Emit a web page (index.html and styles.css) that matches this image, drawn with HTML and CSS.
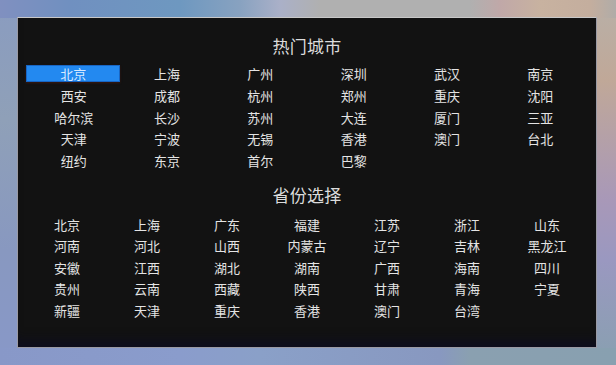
FILE: index.html
```html
<!DOCTYPE html>
<html lang="zh">
<head>
<meta charset="utf-8">
<link rel="stylesheet" href="styles.css">
</head>
<body>
<div class="panel">
  <div class="title">热门城市</div>
  <div class="grid hot">
    <div class="item active">北京</div><div class="item">上海</div><div class="item">广州</div><div class="item">深圳</div><div class="item">武汉</div><div class="item">南京</div>
    <div class="item">西安</div><div class="item">成都</div><div class="item">杭州</div><div class="item">郑州</div><div class="item">重庆</div><div class="item">沈阳</div>
    <div class="item">哈尔滨</div><div class="item">长沙</div><div class="item">苏州</div><div class="item">大连</div><div class="item">厦门</div><div class="item">三亚</div>
    <div class="item">天津</div><div class="item">宁波</div><div class="item">无锡</div><div class="item">香港</div><div class="item">澳门</div><div class="item">台北</div>
    <div class="item">纽约</div><div class="item">东京</div><div class="item">首尔</div><div class="item">巴黎</div>
  </div>
  <div class="title title2">省份选择</div>
  <div class="grid prov">
    <div class="item">北京</div><div class="item">上海</div><div class="item">广东</div><div class="item">福建</div><div class="item">江苏</div><div class="item">浙江</div><div class="item">山东</div>
    <div class="item">河南</div><div class="item">河北</div><div class="item">山西</div><div class="item">内蒙古</div><div class="item">辽宁</div><div class="item">吉林</div><div class="item">黑龙江</div>
    <div class="item">安徽</div><div class="item">江西</div><div class="item">湖北</div><div class="item">湖南</div><div class="item">广西</div><div class="item">海南</div><div class="item">四川</div>
    <div class="item">贵州</div><div class="item">云南</div><div class="item">西藏</div><div class="item">陕西</div><div class="item">甘肃</div><div class="item">青海</div><div class="item">宁夏</div>
    <div class="item">新疆</div><div class="item">天津</div><div class="item">重庆</div><div class="item">香港</div><div class="item">澳门</div><div class="item">台湾</div>
  </div>
</div>
</body>
</html>
```
FILE: styles.css
```css
html, body {
  margin: 0;
  padding: 0;
}
body {
  width: 616px;
  height: 365px;
  overflow: hidden;
  font-family: "Noto Sans CJK SC", "Noto Sans", sans-serif;
  background:
    linear-gradient(to right, #8090c0 0, #7090c0 70px, #6e98c0 180px, #88a2c0 240px, #aab0c8 280px, #b0b0b0 320px, #b0b0b0 470px, #c0a8a8 500px, #c8b2a0 540px, #c4ae9e 590px, #b0aca8 616px) top / 100% 18px no-repeat,
    linear-gradient(to right, #8898c8 0, #8a9ccc 180px, #8aa0c8 260px, #8898c0 440px, #8aa0b0 470px, #88a0b0 616px) bottom / 100% 17px no-repeat,
    linear-gradient(to bottom, #b8b0a8 0, #c0a898 80px, #a898b8 200px, #9a98c0 260px, #88a0b0 365px) right / 19px 100% no-repeat,
    linear-gradient(to bottom, #8a9cc0 0, #8fa0b8 120px, #8898c0 250px, #8898c8 365px) left / 17px 100% no-repeat;
  box-sizing: border-box;
  padding: 17px 19px 17px 17px;
}
.panel {
  box-sizing: border-box;
  width: 580px;
  height: 331px;
  background: #121212;
  border: 1px solid #9a9aa4;
  border-top-color: #c8c8c8;
  box-shadow: inset 0 -14px 14px -10px #0c0c22;
  padding: 18px 9px 0 9px;
}
.title {
  text-align: center;
  font-size: 17px;
  line-height: 20px;
  height: 20px;
  color: #dcdcdc;
  letter-spacing: 0.3px;
}
.grid {
  display: grid;
  color: #e4e4e4;
  font-size: 13px;
}
.item {
  height: 17px;
  line-height: 17px;
  text-align: center;
  white-space: nowrap;
}
.hot {
  margin-top: 9px;
  grid-template-columns: repeat(6, 1fr);
  row-gap: 4.75px;
}
.prov {
  margin-top: 10.5px;
  grid-template-columns: repeat(7, 1fr);
  row-gap: 4.5px;
}
.title2 {
  margin-top: 16px;
}
.active {
  background: #2389f0;
  box-shadow: inset 0 0 0 1px #1866c4, 0 1px 2px #3a1810;
  color: #d8eaff;
  margin: 0 0 0 -1px;
}
```
